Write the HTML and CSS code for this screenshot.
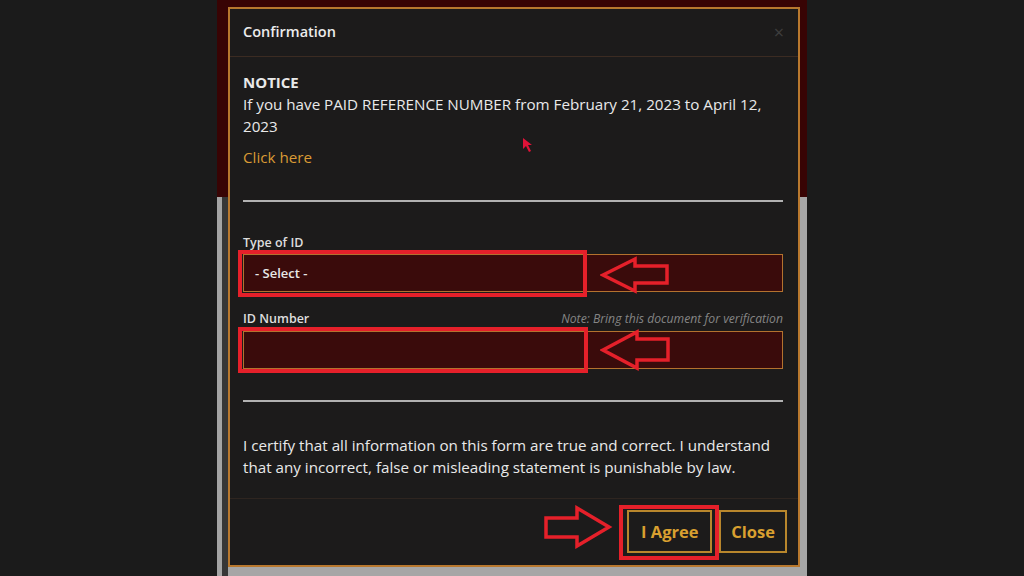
FILE: index.html
```html
<!DOCTYPE html>
<html lang="en">
<head>
<meta charset="utf-8">
<title>Confirmation</title>
<link rel="stylesheet" href="styles.css">
</head>
<body>
<div class="stage">
  <div class="modal">
    <div class="modal-header">
      <span class="modal-title">Confirmation</span>
      <span class="modal-close">&times;</span>
    </div>
    <div class="modal-body">
      <p class="notice-title">NOTICE</p>
      <p class="notice-text">If you have PAID REFERENCE NUMBER from February 21, 2023 to April 12, 2023</p>
      <p class="notice-link">Click here</p>
      <div class="rule"></div>
      <div class="field field-type">
        <div class="field-label-row"><span class="field-label">Type of ID</span></div>
        <div class="field-box">
          <div class="control">- Select -</div>
          <div class="annot-box annot-box-1"></div>
          <svg class="annot-arrow annot-arrow-1" width="72" height="38" viewBox="0 0 72 38"><polygon points="3,19 35,3 35,10 67,10 67,27 35,27 35,35" fill="none" stroke="#e5202a" stroke-width="3.5" stroke-linejoin="miter"/></svg>
        </div>
      </div>
      <div class="field field-number">
        <div class="field-label-row"><span class="field-label">ID Number</span><span class="field-note">Note: Bring this document for verification</span></div>
        <div class="field-box">
          <div class="control"></div>
          <div class="annot-box annot-box-2"></div>
          <svg class="annot-arrow annot-arrow-2" width="72" height="42" viewBox="0 0 72 42"><polygon points="3,21 37,3 37,10 68,10 68,31 37,31 37,39" fill="none" stroke="#e5202a" stroke-width="3.5" stroke-linejoin="miter"/></svg>
        </div>
      </div>
      <div class="rule rule-2"></div>
      <p class="certify">I certify that all information on this form are true and correct. I understand that any incorrect, false or misleading statement is punishable by law.</p>
    </div>
    <div class="modal-footer">
      <div class="btn-wrap">
        <button class="btn">I Agree</button>
        <div class="annot-box annot-box-3"></div>
        <svg class="annot-arrow annot-arrow-3" width="70" height="44" viewBox="0 0 70 44"><polygon points="3,13 34,13 34,3 66,22 34,41 34,32 3,32" fill="none" stroke="#e5202a" stroke-width="3.5" stroke-linejoin="miter"/></svg>
      </div>
      <button class="btn">Close</button>
    </div>
    <svg class="cursor" width="12" height="16" viewBox="0 0 12 16"><polygon points="1,1 1,12 4,9 7,15 9,14 6,8 10,8" fill="#e01238"/></svg>
  </div>
</div>
</body>
</html>
```
FILE: styles.css
```css
* { box-sizing: border-box; }
html, body { margin: 0; padding: 0; }
body {
  background: #1b1b1b;
  font-family: "Open Sans", "Liberation Sans", sans-serif;
  color: #e9e9e9;
  width: 1024px;
  height: 576px;
  overflow: hidden;
}
.stage {
  width: 590px;
  height: 576px;
  margin: 0 auto;
  padding: 7px 7px 9px 11px;
  background:
    linear-gradient(to right, #a4a4a4 0 5px, #363636 5px 11px) 0 197px / 11px 379px no-repeat,
    linear-gradient(to bottom, #380404 0 197px, #a6a6a6 197px);
}
.modal {
  position: relative;
  height: 560px;
  background: #1c1b1b;
  border: 2px solid #b8782e;
  display: flex;
  flex-direction: column;
}
.modal-header {
  display: flex;
  justify-content: space-between;
  align-items: center;
  padding: 13px 14px 14px 13px;
  border-bottom: 1px solid #3b2b22;
}
.modal-title {
  font-size: 14.5px;
  font-weight: 600;
  line-height: 20px;
  color: #ececec;
}
.modal-close {
  font-size: 18px;
  line-height: 20px;
  color: #3e3e3e;
}
.modal-body {
  padding: 14px 15px 0 13px;
  flex: 1;
  border-bottom: 1px solid #2e2520;
}
.modal-body p { margin: 0; }
.notice-title {
  font-size: 15px;
  font-weight: 700;
  line-height: 22px;
}
.notice-text {
  font-size: 15.2px;
  line-height: 22px;
}
.notice-link {
  margin-top: 9px !important;
  font-size: 15.2px;
  line-height: 22px;
  color: #d99a34;
}
.rule {
  height: 2px;
  background: #b2b2b2;
  margin-top: 32px;
}
.field-type { margin-top: 31px; }
.field-number { margin-top: 17px; }
.field-label-row {
  display: flex;
  justify-content: space-between;
  align-items: center;
  height: 18px;
}
.field-label {
  font-size: 12.5px;
  font-weight: 600;
  color: #dedede;
}
.field-note {
  font-size: 12.2px;
  font-style: italic;
  color: #858585;
}
.field-box {
  position: relative;
  margin-top: 3px;
}
.field-number .field-box { margin-top: 4px; }
.control {
  height: 38px;
  background: #3a0b0b;
  border: 1px solid #b3722e;
  font-size: 13px;
  font-weight: 600;
  color: #e8e8e8;
  padding-left: 11px;
  display: flex;
  align-items: center;
}
.annot-box {
  position: absolute;
  border: 4px solid #e5202a;
  pointer-events: none;
}
.annot-box-1 { left: -5px; top: -4px; width: 349px; height: 47px; }
.annot-box-2 { left: -5px; top: -4px; width: 350px; height: 46px; }
.annot-arrow { position: absolute; }
.annot-arrow-1 { left: 357px; top: 2px; }
.annot-arrow-2 { left: 357px; top: -2px; }
.rule-2 { margin-top: 31px; }
.certify {
  margin-top: 32px !important;
  font-size: 15.2px;
  line-height: 22px;
}
.modal-footer {
  display: flex;
  justify-content: flex-end;
  gap: 7px;
  padding: 11px 11px 12px 0;
}
.btn-wrap { position: relative; }
.btn {
  height: 43px;
  background: transparent;
  border: 2px solid #b8862c;
  color: #d9a030;
  font-family: "Open Sans", "Liberation Sans", sans-serif;
  font-size: 16.5px;
  font-weight: 700;
  padding: 0 10px;
  display: block;
}
.btn-wrap .btn { width: 85px; }
.annot-box-3 { left: -8px; top: -5px; width: 100px; height: 55px; }
.annot-arrow-3 { left: -84px; top: -5px; }
.cursor {
  position: absolute;
  left: 292px;
  top: 128px;
}
```
